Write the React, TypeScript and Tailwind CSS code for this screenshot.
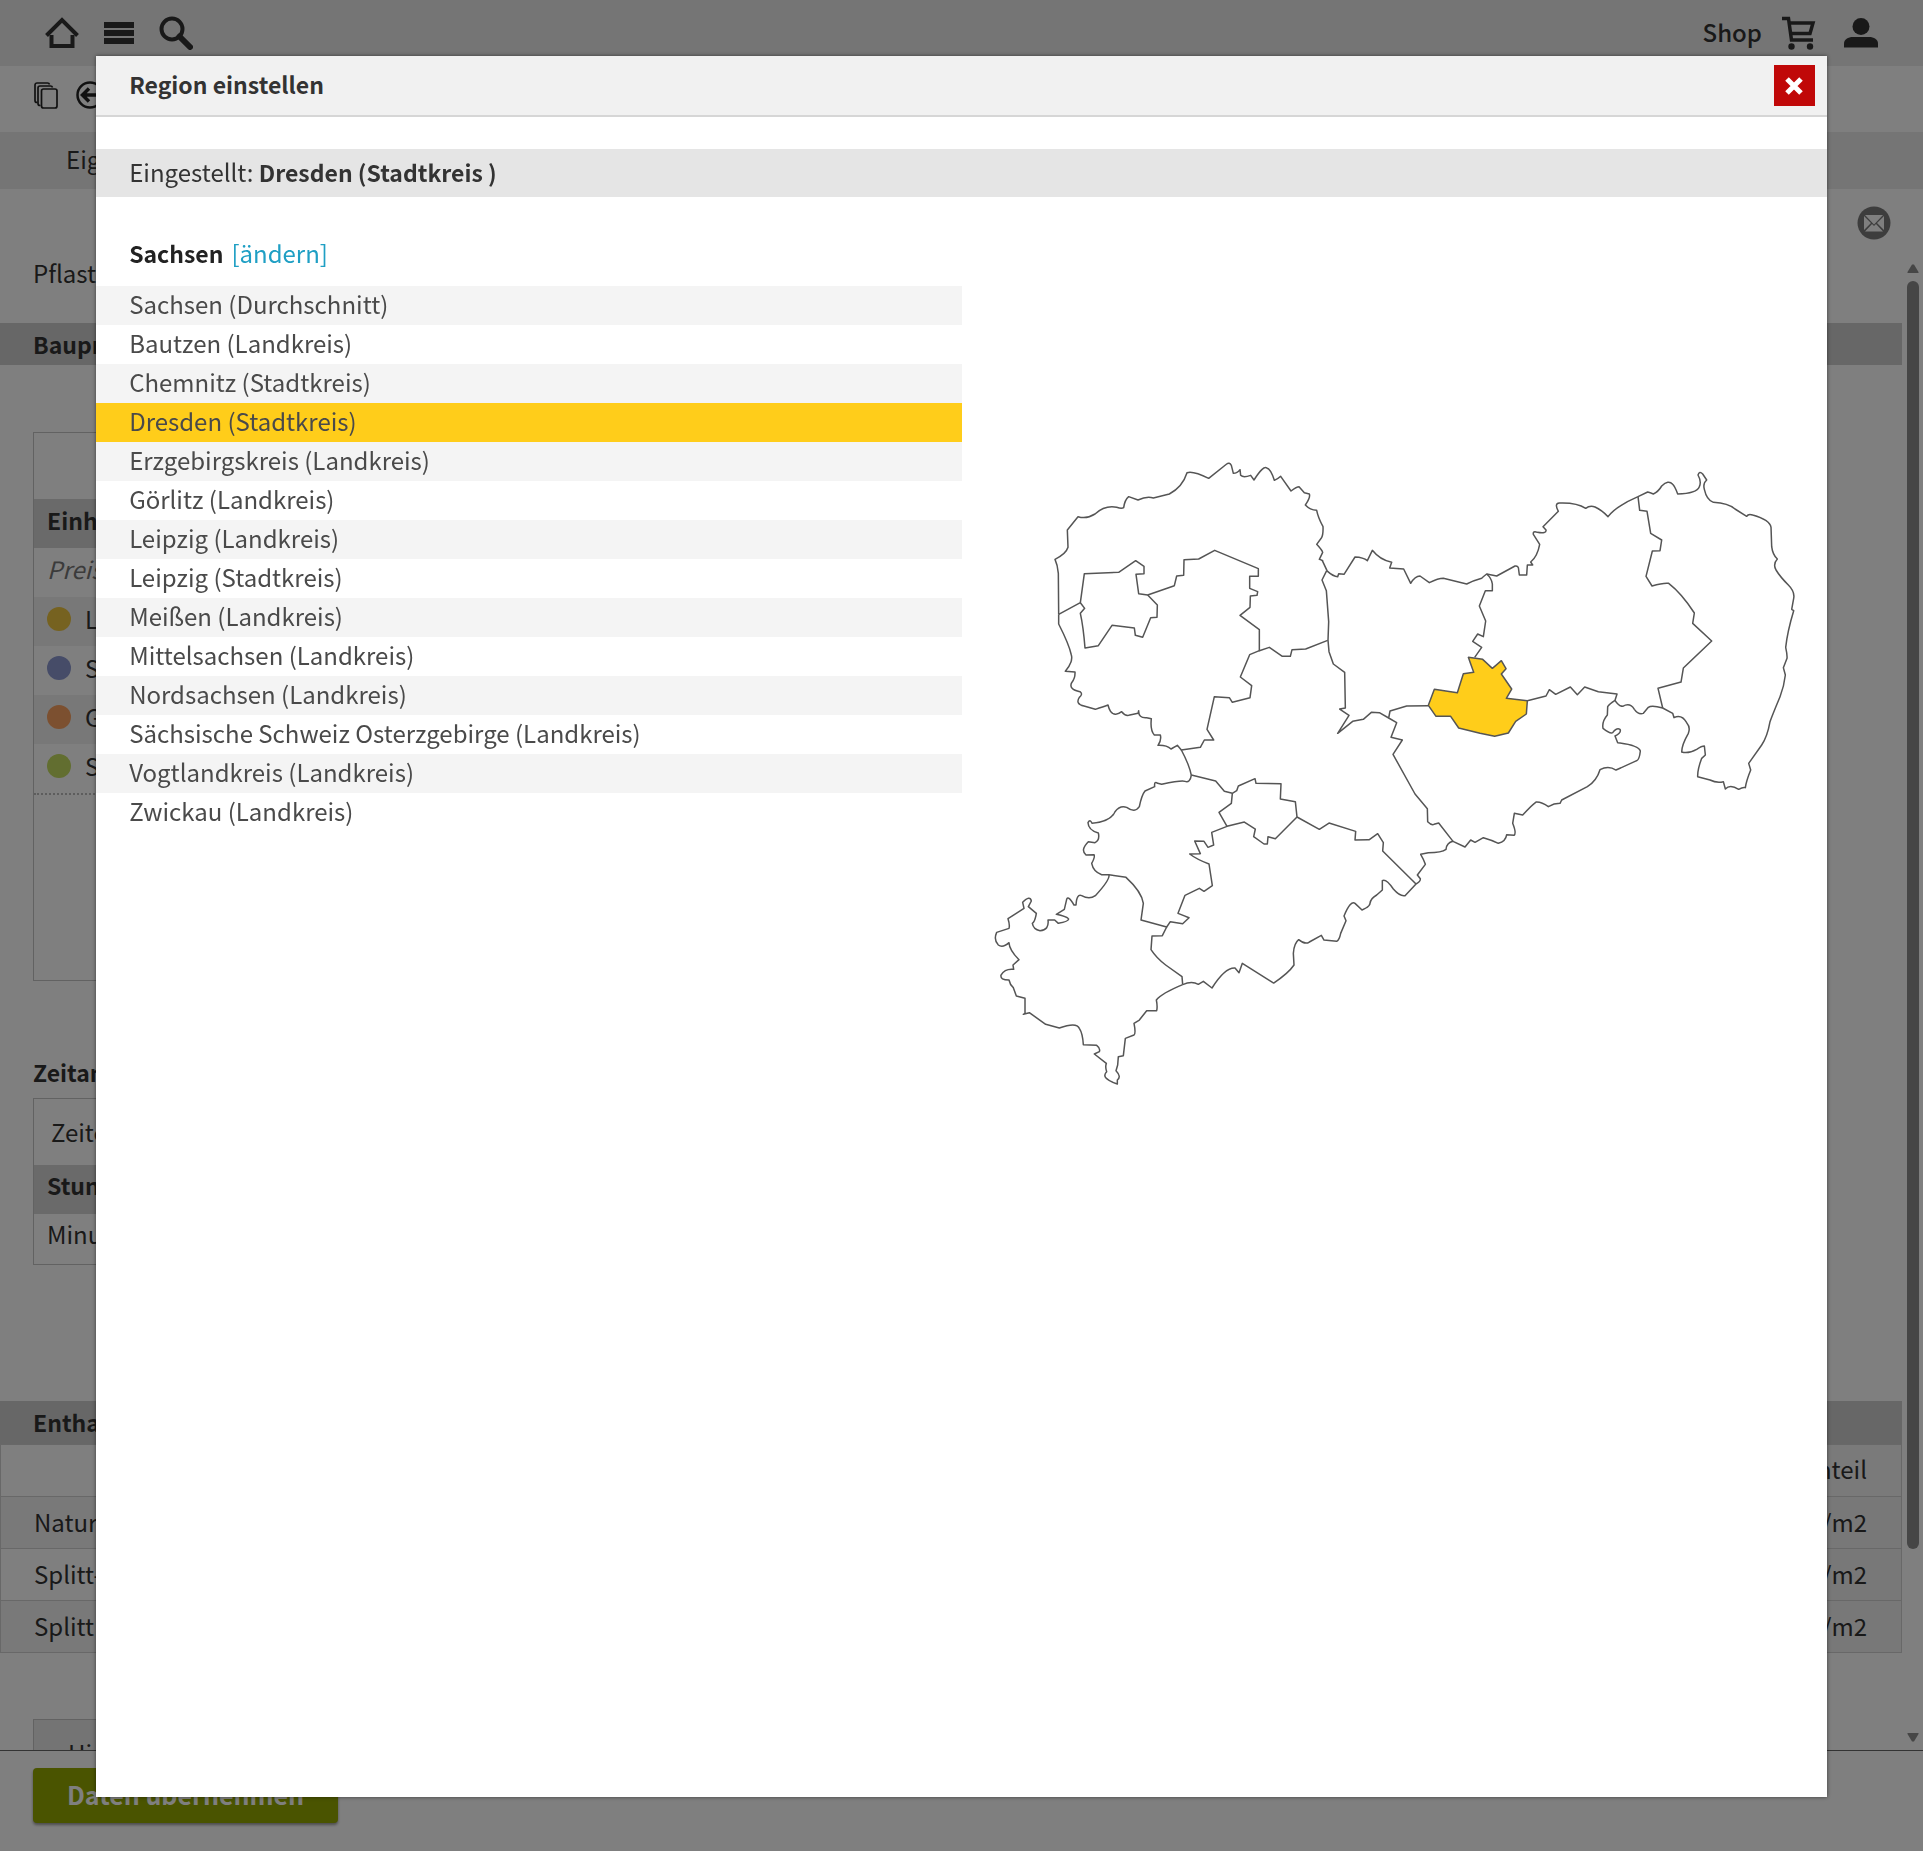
import { useState } from 'react';

const regions = [
  'Sachsen (Durchschnitt)',
  'Bautzen (Landkreis)',
  'Chemnitz (Stadtkreis)',
  'Dresden (Stadtkreis)',
  'Erzgebirgskreis (Landkreis)',
  'Görlitz (Landkreis)',
  'Leipzig (Landkreis)',
  'Leipzig (Stadtkreis)',
  'Meißen (Landkreis)',
  'Mittelsachsen (Landkreis)',
  'Nordsachsen (Landkreis)',
  'Sächsische Schweiz Osterzgebirge (Landkreis)',
  'Vogtlandkreis (Landkreis)',
  'Zwickau (Landkreis)',
];

const shares = [
  { label: 'Lohn', dot: 'bg-[#ecc440]', row: 'bg-[#f0f0f0]' },
  { label: 'Stoffe', dot: 'bg-[#8c98d0]', row: '' },
  { label: 'Geräte', dot: 'bg-[#f8a060]', row: 'bg-[#f0f0f0]' },
  { label: 'Sonstiges', dot: 'bg-[#c4dc60]', row: '' },
];

const services = ['Natursteinpflaster', 'Splitt-Bettung', 'Splitt 0/5'];

const HomeIcon = () => (
  <svg viewBox="0 0 34 32" className="h-8 w-[34px]" fill="none" stroke="#333" strokeWidth="4">
    <path d="M1.5 18.500 17 3l15.500 15.500" />
    <path d="M6.500 18v11h21V18" />
  </svg>
);

const MenuIcon = () => (
  <svg viewBox="0 0 30 24" className="h-6 w-[30px]" fill="#333">
    <path d="M0 1h30v6H0zM0 9h30v6H0zM0 17h30v6H0z" />
  </svg>
);

const SearchIcon = () => (
  <svg viewBox="0 0 34 34" className="h-[34px] w-[34px]" fill="none" stroke="#333">
    <circle cx="13" cy="13" r="10.500" strokeWidth="4" />
    <path d="M20.500 20.500 31 31" strokeWidth="6" strokeLinecap="round" />
  </svg>
);

const CartIcon = () => (
  <svg viewBox="0 0 34 34" className="h-[34px] w-[34px]" fill="none" stroke="#333" strokeWidth="3.500">
    <path d="M0 2.500h6.500L9.500 24H31" />
    <path d="M7 7h24l-3 10.500H9" />
    <circle cx="9.500" cy="30.500" r="3.200" fill="#333" stroke="none" />
    <circle cx="28" cy="30.500" r="3.200" fill="#333" stroke="none" />
  </svg>
);

const UserIcon = () => (
  <svg viewBox="0 0 34 30" className="h-[30px] w-[34px]" fill="#333">
    <circle cx="17" cy="8.500" r="8.500" />
    <path d="M0 29.500v-4C0 21.500 4 19 9 19h16c5 0 9 2.500 9 6.500v4z" />
  </svg>
);

const CopyIcon = () => (
  <svg viewBox="0 0 24 27" className="h-[27px] w-6" fill="none" stroke="#222" strokeWidth="1.700">
    <path d="M3.500 20.500H3a2 2 0 0 1-2-2V3a2 2 0 0 1 2-2h10.500a2 2 0 0 1 2 1.500" />
    <path d="M6.500 23.500H6a2 2 0 0 1-2-2V6a2 2 0 0 1 2-2h10.500a2 2 0 0 1 2 1.500" />
    <rect x="7.500" y="7" width="15.500" height="19" rx="2" />
  </svg>
);

const BackIcon = () => (
  <svg viewBox="0 0 28 28" className="h-7 w-7" fill="none" stroke="#222">
    <circle cx="14" cy="14" r="12.500" strokeWidth="2.500" />
    <path d="M22 14H7M13 7.500 6.500 14l6.500 6.500" strokeWidth="3.500" />
  </svg>
);

const MailIcon = () => (
  <svg viewBox="0 0 34 34" className="h-[34px] w-[34px]">
    <circle cx="17" cy="17" r="16.500" fill="#7a7a7a" />
    <path d="M7 10v14l7-7zM27 10v14l-7-7zM8 9h18l-9 9.500zM8 25.500l7-7.500 2 2 2-2 7 7.500z" fill="#fff" />
  </svg>
);

// Sachsen mit Kreisgrenzen, drei Teilflächen mit eigenem Ursprung
const RegionMap = () => (
  <svg
    viewBox="42 0 2404 1980"
    className="w-full"
    fill="none"
    stroke="#555"
    strokeWidth="4.500"
    strokeLinejoin="round"
    role="img"
    aria-label="Sachsen"
  >
    {/* Nordsachsen, Leipzig */}
    <g>
      <path d="M236 523 235 400Q233 375 225 358 258 342 264 322L262 270 294 230Q320 238 345 222 375 195 410 202 425 207 431 203 434 180 446 170L474 180Q500 168 520 174L568 162Q608 140 621 98 640 92 686 115L740 72Q748 66 754 76L760 100Q772 100 780 89L782 106Q790 114 812 106L822 120Q850 76 860 84 872 86 883 121 895 116 902 109L933 153Q950 140 957 140L973 158 988 162Q992 172 976 195 990 210 1010 211 1014 232 1029 260 1030 285 1024 294L1010 313Q1026 330 1028 337L1018 358Q1030 362 1028 364L1041 392" />
      <path d="M1043 601 977 627 936 629 931 649 907 649 868 622 838 632 838 569 780 526 810 502 811 468 831 466 833 455 809 445 809 409 835 409 835 386 704 331 656 357 612 359 611 406 590 408 583 437 503 465 476 461 468 403 492 401 492 379 467 362 416 397 313 401 301 488 236 523" />
      <path d="M301 488 314 505 301 520Q310 560 315 624L355 617 396 556 463 564 466 586 488 592 512 533 531 532 532 495 503 465" />
      <path d="M236 523V552Q268 615 274 645 280 665 256 694L285 696Q286 715 275 728 265 748 300 755 310 762 298 772 285 792 312 798L346 808Q370 800 384 795 390 820 403 822 412 825 425 815 435 828 446 826L474 820 476 812Q475 835 500 833L514 836Q510 870 523 885L541 885Q545 900 534 916 560 915 573 927L592 916 604 930" />
      <path d="M838 632 809 644 781 711 815 737 810 773 757 787 748 773 703 770 681 868 701 900 673 900 661 922 604 930Q628 975 634 1006" />
    </g>
    {/* Meißen, Bautzen, Görlitz, Sächsische Schweiz */}
    <g transform="translate(960 0)">
      <path d="M80 392Q100 410 113 410L116 401 132 403 165 351Q190 352 202 362L217 331Q240 360 275 367L269 384 311 387 332 430Q345 408 360 408L388 428Q415 415 430 415L500 432Q520 422 545 415 552 408 560 402L590 408 645 378Q656 376 656 390L658 405 680 405 682 375 698 375 692 366Q712 350 719 313L700 283Q698 272 712 277 740 282 738 270L729 260 775 214Q762 190 778 189 830 187 857 205 870 195 885 201 905 210 924 230 945 200 1014 170L1043 156Q1050 158 1060 162 1075 155 1085 138 1105 118 1118 133 1125 140 1133 162 1190 160 1198 140 1205 125 1194 105 1198 92 1208 102L1220 120Q1208 130 1213 148 1220 180 1240 187 1285 190 1305 207L1340 229Q1345 220 1358 225 1410 240 1413 262L1415 320Q1418 345 1432 357 1418 372 1428 390 1440 410 1465 435 1485 455 1481 475L1475 508 1481 512Q1462 575 1457 622 1462 645 1461 655L1450 683 1456 705Q1452 740 1440 770 1415 830 1410 845 1402 890 1385 915L1346 970 1352 990Q1338 1025 1336 1043 1330 1040 1316 1048 1290 1032 1276 1047L1270 1025Q1250 1030 1230 1020L1193 1010Q1192 990 1205 955L1216 945 1213 918Q1205 918 1190 928 1165 942 1145 936 1145 915 1165 880 1172 862 1160 848 1145 822 1122 833L1118 820 1088 804Q1055 795 1045 802L1030 820Q1015 825 1003 808 990 786 968 799 955 798 945 781" />
      <path d="M1014 170 1019 211 1041 214 1052 280 1085 300 1080 332 1057 333 1038 409 1056 438Q1090 428 1106 430 1145 460 1183 519L1178 550 1235 603 1150 684 1143 726 1074 745 1088 804" />
      <path d="M560 402Q575 415 577 432V452H556L538 498 557 543 550 590 533 582 518 604 545 622 524 652" />
      <path d="M682 782 738 768 748 749 767 763 811 741 832 764 854 741 895 755 951 762 945 781Q928 792 923 800L922 825Q905 845 909 865 930 882 938 878 950 862 960 868 965 878 945 888L953 908Q1015 915 1021 933 1018 960 1010 962L948 990Q925 975 900 989 890 1022 862 1040L785 1080 780 1090Q762 1090 745 1100 725 1085 708 1086 695 1095 668 1125L643 1120 638 1150Q650 1180 642 1186L620 1184Q617 1205 595 1210 575 1200 550 1193L525 1207 512 1200 495 1221 459 1204Q440 1208 438 1228 425 1238 385 1238L362 1243Q372 1260 376 1273L352 1305 361 1316Q362 1325 348 1332" />
      <path d="M385 797 320 798 270 813 266 834 290 848 273 892 307 900 279 943 345 1062 382 1106 383 1145Q395 1157 402 1153L416 1149 459 1204" />
      <path d="M80 392 66 420 79 452 86 545 84 601 87 635 100 672 134 697 136 804 119 807 147 826 113 880 158 844 190 838 214 817 238 818 266 834" />
      <path
        fill="#ffcd1a"
        d="M505 652 548 658 577 685 604 662 618 686 604 702 635 747 619 775 682 782 679 822 647 844 625 879 584 889 540 880 476 864 452 829 408 829 385 796 403 748 472 758 490 701 521 697Z"
      />
    </g>
    {/* Chemnitz, Zwickau, Erzgebirge, Vogtland */}
    <g transform="translate(0 900)">
      <path d="M634 105 707 123 733 154 757 160 770 152 775 138 825 116 828 130 903 131 901 177 946 185 951 231 1018 268 1047 249 1127 274 1125 300 1168 299 1193 281 1210 308 1208 333 1308 432" />
      <path d="M757 160 754 190 717 217 741 259 793 246 826 267 821 290 852 312 862 312 864 290 886 296 951 231" />
      <path d="M741 259 695 277 701 315 684 322 672 304 644 303 661 341 629 342Q650 358 687 372L697 437 672 454 658 445 615 466 594 520 627 533 608 551 571 545 560 561 483 540 490 490Q485 455 438 412L387 404" />
      <path d="M560 561 547 587 516 588 513 629Q530 655 557 675L606 710 608 734" />
      <path d="M634 105Q630 130 615 124 605 120 545 133L533 130Q522 122 524 140L495 153Q485 165 478 200 465 220 440 202 420 195 405 215 392 245 336 250 330 235 324 248 325 270 355 279 360 300 345 308L325 305Q300 330 318 345L342 344Q346 350 335 370 340 395 365 404L387 404" />
      <path d="M387 404Q390 420 346 467 328 480 305 467 290 460 288 495L282 495Q265 465 260 478L253 508 229 523Q262 530 266 537 265 545 235 550L224 540 204 540Q208 570 180 572 160 568 157 550 165 545 169 520L145 500 154 483Q150 465 128 487L132 505 84 536Q90 555 87 565L50 577Q40 600 55 615 68 625 87 608 88 630 117 659L99 675 101 688Q75 685 63 705 60 720 87 720 90 735 100 743L109 768 135 775 135 820 130 823 148 818 197 853 238 864Q290 845 298 865 308 880 310 914L350 916Q362 925 358 935L343 942 379 970Q375 980 380 995 360 1015 412 1032L412 1020Q425 1010 408 992L413 975 415 950 430 947 436 895 462 885Q468 880 462 850L478 840 500 812 530 812Q533 800 529 780 545 760 608 734" />
      <path d="M608 734Q635 722 655 733L670 724 696 744Q735 682 765 684L777 698 787 670 881 729Q925 700 942 675L940 640Q942 610 956 599 975 615 988 606L1024 586 1032 600 1070 604Q1078 600 1082 580L1098 542 1092 528Q1112 480 1125 490L1146 510Q1170 500 1170 490 1172 475 1190 465L1207 450 1207 422Q1218 415 1240 447 1260 470 1275 467L1308 432" />
    </g>
  </svg>
);

const Page = () => (
  <div className="flex h-screen flex-col overflow-hidden bg-white">
    <header className="flex h-[66px] shrink-0 items-center justify-between bg-[#ebebeb] px-[45px]">
      <nav className="flex items-center gap-[25px]">
        <button aria-label="Start">
          <HomeIcon />
        </button>
        <button aria-label="Menü">
          <MenuIcon />
        </button>
        <button aria-label="Suche">
          <SearchIcon />
        </button>
      </nav>
      <div className="flex items-center gap-5">
        <a href="#shop" className="pb-0.5 font-medium">
          Shop
        </a>
        <button aria-label="Warenkorb">
          <CartIcon />
        </button>
        <button aria-label="Konto" className="ml-2">
          <UserIcon />
        </button>
      </div>
    </header>

    <div className="flex h-[66px] shrink-0 items-center gap-[18px] pb-2 pl-[34px]">
      <button aria-label="Kopieren">
        <CopyIcon />
      </button>
      <button aria-label="Zurück">
        <BackIcon />
      </button>
    </div>

    <div className="h-[57px] shrink-0 bg-[#ebebeb] pl-[66px] pt-2.5">
      <a href="#eigenschaften">Eigenschaften</a>
    </div>

    <div className="flex h-[67px] shrink-0 items-center justify-end pr-8">
      <button aria-label="E-Mail">
        <MailIcon />
      </button>
    </div>

    <div className="flex min-h-0 flex-1">
      <main className="min-w-0 flex-1 overflow-hidden">
        <p className="pl-[33px]">Pflasterdecke</p>

        <h2 className="mt-[33px] h-[42px] bg-[#cecece] pl-[33px] pt-1 text-[23px] font-bold">Baupreise</h2>

        <section className="ml-[33px] mt-[67px] w-1/2 border border-[#c4c4c4] pb-[185px] pt-[66px]">
          <h3 className="h-[49px] bg-[#d4d4d4] px-[13px] pt-1 text-[23px] font-bold">Einheitspreis</h3>
          <p className="h-[49px] px-[13px] pt-1 italic text-[#777]">Preisanteile</p>
          {shares.map((share) => (
            <div key={share.label} className={`flex h-[49px] items-center gap-3.5 px-[13px] pb-1.5 ${share.row}`}>
              <span className={`h-6 w-6 rounded-full ${share.dot}`} />
              <span>{share.label}</span>
            </div>
          ))}
          <div className="border-t-2 border-dotted border-[#bbb]" />
        </section>

        <h2 className="mt-[74px] pl-[33px] text-[23px] font-bold">Zeitansatz</h2>
        <section className="ml-[33px] mt-[9px] w-1/2 border border-[#c4c4c4]">
          <p className="px-[17px] py-4">Zeiteinheit</p>
          <h3 className="h-[49px] bg-[#d4d4d4] px-[13px] pt-[3px] text-[23px] font-bold">Stunden</h3>
          <p className="h-[50px] px-[13px] pt-[3px]">Minuten</p>
        </section>

        <h2 className="mt-[136px] h-[43px] bg-[#cecece] pl-[33px] pt-1 text-[23px] font-bold">
          Enthaltene Leistungen
        </h2>
        <table className="w-full border-collapse border border-[#d0d0d0]">
          <thead>
            <tr className="h-[52px] border-b border-[#d0d0d0]">
              <th />
              <th className="bg-[#f4f4f4] pb-1 pr-[34px] text-right font-normal">Anteil</th>
            </tr>
          </thead>
          <tbody>
            {services.map((name, i) => (
              <tr key={name} className={`h-[52px] border-b border-[#d0d0d0] ${i % 2 === 0 ? 'bg-[#f2f2f2]' : ''}`}>
                <td className="pb-0.5 pl-[33px]">{name}</td>
                <td className="bg-[#f0f0f0] pb-0.5 pr-[34px] text-right">1,00 m2/m2</td>
              </tr>
            ))}
          </tbody>
        </table>

        <section className="ml-[33px] mt-[66px] w-1/2 border border-[#c4c4c4] bg-[#e8e8e8] px-[34px] py-4">
          Hinweise
        </section>
      </main>

      {/* Bildlaufleiste */}
      <div className="flex w-[21px] shrink-0 flex-col items-center py-2">
        <svg viewBox="0 0 12 9" className="h-[9px] w-3" fill="#8c8c8c">
          <path d="M5 .5h2L11.500 8v1H.5V8z" />
        </svg>
        <div className="mb-[184px] mt-2 w-3 flex-1 rounded-full bg-[#8c8c8c]" />
        <svg viewBox="0 0 12 9" className="h-[9px] w-3" fill="#8c8c8c">
          <path d="M5 8.500h2L11.500 1V0H.5v1z" />
        </svg>
      </div>
    </div>

    <footer className="h-[101px] shrink-0 border-t border-[#666] pl-[33px] pt-[17px]">
      <button className="h-[55px] rounded bg-[#94a800] px-[34px] pb-1 text-[25px] font-bold text-white shadow-[0_2px_3px_#0006]">
        Daten übernehmen
      </button>
    </footer>
  </div>
);

const App = () => {
  const [selected, setSelected] = useState('Dresden (Stadtkreis)');
  const [isOpen, setIsOpen] = useState(true);

  return (
    <div className="font-['Noto_Sans_CJK_SC','Noto_Sans',sans-serif] text-[24px] leading-[34px] text-[#333]">
      <Page />
      {isOpen && (
        <div className="fixed inset-0 bg-black/50">
          <div
            role="dialog"
            aria-labelledby="region-title"
            className="fixed inset-x-[5%] bottom-[54px] top-[3%] bg-white shadow-[0_0_4px_#0008]"
          >
            <div className="flex h-[61px] items-center justify-between border-b-2 border-[#d6d6d6] bg-[#f1f1f1] pl-[33px] pr-3">
              <h1 id="region-title" className="pb-0.5 text-[23px] font-bold">
                Region einstellen
              </h1>
              <button
                aria-label="Schließen"
                className="mt-px flex h-[41px] w-[41px] items-center justify-center bg-[#c00808]"
                onClick={() => setIsOpen(false)}
              >
                <svg viewBox="0 0 18 18" className="h-[18px] w-[18px]" stroke="#fff" strokeWidth="5">
                  <path d="M2 2l14 14M16 2 2 16" />
                </svg>
              </button>
            </div>

            <p className="mt-8 h-[48px] bg-[#e5e5e5] pl-[33px] pt-1.5">
              Eingestellt: <b className="text-[23px]">Dresden (Stadtkreis )</b>
            </p>

            <div className="grid grid-cols-2 pt-[39px]">
              <div>
                <p className="pb-4 pl-[33px]">
                  <b className="mr-2 text-[23px] text-[#222]">Sachsen</b>
                  <a href="#land" className="text-[#1f9fc4]">
                    [ändern]
                  </a>
                </p>
                <ul className="text-[#4a4a4a]">
                  {regions.map((name) => (
                    <li key={name} className="odd:bg-[#f4f4f4]">
                      <button
                        className={`block w-full pb-1 pl-[33px] pt-px text-left ${name === selected ? 'bg-[#ffcd1a]' : ''}`}
                        onClick={() => setSelected(name)}
                      >
                        {name}
                      </button>
                    </li>
                  ))}
                </ul>
              </div>
              <div className="px-8 pt-[204px]">
                <RegionMap />
              </div>
            </div>
          </div>
        </div>
      )}
    </div>
  );
};

export default App;
